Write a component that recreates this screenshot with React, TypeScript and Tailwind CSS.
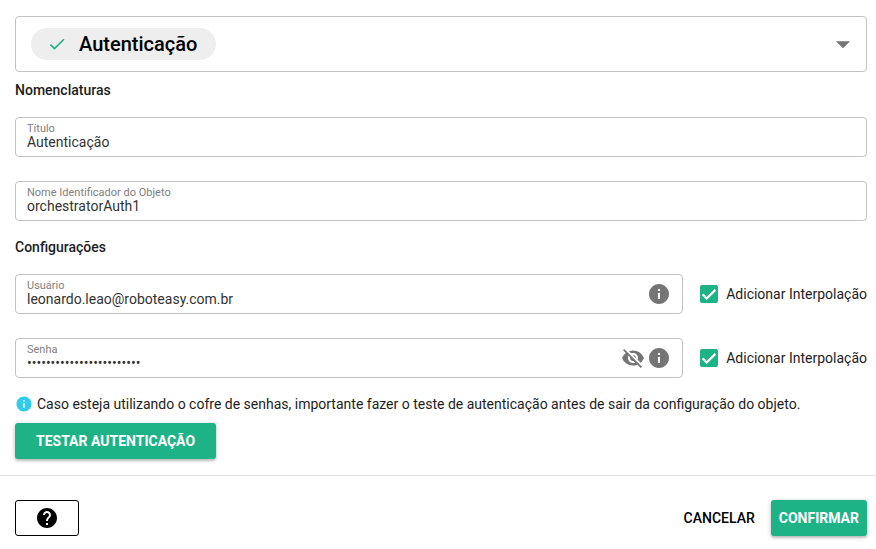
import { useId, useState } from "react";
import type { ReactNode } from "react";
import { MdArrowDropDown, MdCheck, MdHelp, MdInfo, MdVisibilityOff } from "react-icons/md";

type FieldProps = {
    label: string;
    value: string;
    type?: string;
    onChange: (value: string) => void;
    children?: ReactNode;
};

function Field({ label, value, type = "text", onChange, children }: FieldProps) {
    const id = useId();

    return (
        <div className="flex h-10 w-full min-w-0 items-center rounded border border-[#c2c2c2] px-[11px]">
            <div className="flex min-w-0 flex-1 flex-col">
                <label htmlFor={id} className="text-[11px] leading-[10px] text-[#808080]">
                    {label}
                </label>
                <input
                    id={id}
                    type={type}
                    value={value}
                    onChange={(e) => onChange(e.target.value)}
                    className="h-4 w-full bg-transparent text-sm leading-4 text-[#333333] outline-none"
                />
            </div>
            {children}
        </div>
    );
}

function InterpolationToggle() {
    const [checked, setChecked] = useState(true);

    return (
        <label className="flex shrink-0 items-center gap-2 text-sm text-[#1d1d1d]">
            <span className="grid size-[18px] place-items-center">
                <input
                    type="checkbox"
                    checked={checked}
                    onChange={(e) => setChecked(e.target.checked)}
                    className="peer col-start-1 row-start-1 size-[18px] appearance-none rounded-xs border-2 border-[#757575] checked:border-[#1eb386] checked:bg-[#1eb386]"
                />
                <svg
                    viewBox="0 0 24 24"
                    className="pointer-events-none invisible col-start-1 row-start-1 size-[18px] peer-checked:visible"
                    fill="none"
                    stroke="#fff"
                    strokeWidth="3"
                >
                    <path d="M3.5 12.5 9 18 20.5 6.5" />
                </svg>
            </span>
            Adicionar Interpolação
        </label>
    );
}

export default function App() {
    const [action, setAction] = useState("auth");
    const [title, setTitle] = useState("Autenticação");
    const [objectName, setObjectName] = useState("orchestratorAuth1");
    const [user, setUser] = useState("leonardo.leao@roboteasy.com.br");
    const [password, setPassword] = useState("senha-cofre-roboteasy-01");

    return (
        <div className="bg-white font-[Roboto,sans-serif] text-sm text-[#1d1d1d]">
            <main className="pt-4 pr-[9px] pb-4 pl-[15px]">
                <div className="flex h-14 items-center justify-between rounded border border-[#c2c2c2] pr-[6px] pl-[15px]">
                    <div className="flex h-8 items-center gap-3 rounded-2xl bg-[#eeeeee] pr-[19px] pl-4">
                        <MdCheck className="size-5 text-[#1eb386]" />
                        <select
                            aria-label="Ação"
                            value={action}
                            onChange={(e) => setAction(e.target.value)}
                            className="appearance-none bg-transparent text-xl font-medium text-black outline-none [field-sizing:content]"
                        >
                            <option value="auth">Autenticação</option>
                        </select>
                    </div>
                    <MdArrowDropDown className="size-[34px] text-[#757575]" />
                </div>

                <h2 className="mt-2 leading-5 font-medium">Nomenclaturas</h2>
                <div className="mt-[17px] flex flex-col gap-6">
                    <Field label="Título" value={title} onChange={setTitle} />
                    <Field label="Nome Identificador do Objeto" value={objectName} onChange={setObjectName} />
                </div>

                <h2 className="mt-4 leading-5 font-medium">Configurações</h2>
                <div className="mt-[17px] flex flex-col gap-6">
                    <div className="flex items-center gap-[17px]">
                        <Field label="Usuário" value={user} onChange={setUser}>
                            <MdInfo className="size-6 shrink-0 text-[#757575]" />
                        </Field>
                        <InterpolationToggle />
                    </div>
                    <div className="flex items-center gap-[17px]">
                        <Field label="Senha" type="password" value={password} onChange={setPassword}>
                            <button type="button" aria-label="Mostrar senha" className="mr-0.5 text-[#757575]">
                                <MdVisibilityOff className="size-6" />
                            </button>
                            <MdInfo className="size-6 shrink-0 text-[#757575]" />
                        </Field>
                        <InterpolationToggle />
                    </div>
                </div>

                <p className="mt-4 flex items-center gap-1 leading-5">
                    <MdInfo className="size-[18px] shrink-0 text-[#31ccec]" />
                    Caso esteja utilizando o cofre de senhas, importante fazer o teste de autenticação antes de sair da
                    configuração do objeto.
                </p>
                <button
                    type="button"
                    className="mt-[9px] h-9 rounded-[3px] bg-[#1eb386] px-[21px] font-bold text-white uppercase shadow-[0_1px_5px_rgba(0,0,0,0.2),0_2px_2px_rgba(0,0,0,0.14)]"
                >
                    Testar Autenticação
                </button>
            </main>

            <footer className="flex items-center justify-between border-t border-[#e0e0e0] py-6 pr-[9px] pl-[15px]">
                <button
                    type="button"
                    aria-label="Ajuda"
                    className="flex h-9 w-16 items-center justify-center rounded-[3px] border border-black text-black"
                >
                    <MdHelp className="size-6" />
                </button>
                <div className="flex items-center gap-2">
                    <button type="button" className="h-9 px-2 font-medium text-black uppercase">
                        Cancelar
                    </button>
                    <button
                        type="button"
                        className="h-9 rounded-[3px] bg-[#1eb386] px-2 font-bold text-white uppercase shadow-[0_1px_5px_rgba(0,0,0,0.2),0_2px_2px_rgba(0,0,0,0.14)]"
                    >
                        Confirmar
                    </button>
                </div>
            </footer>
        </div>
    );
}
